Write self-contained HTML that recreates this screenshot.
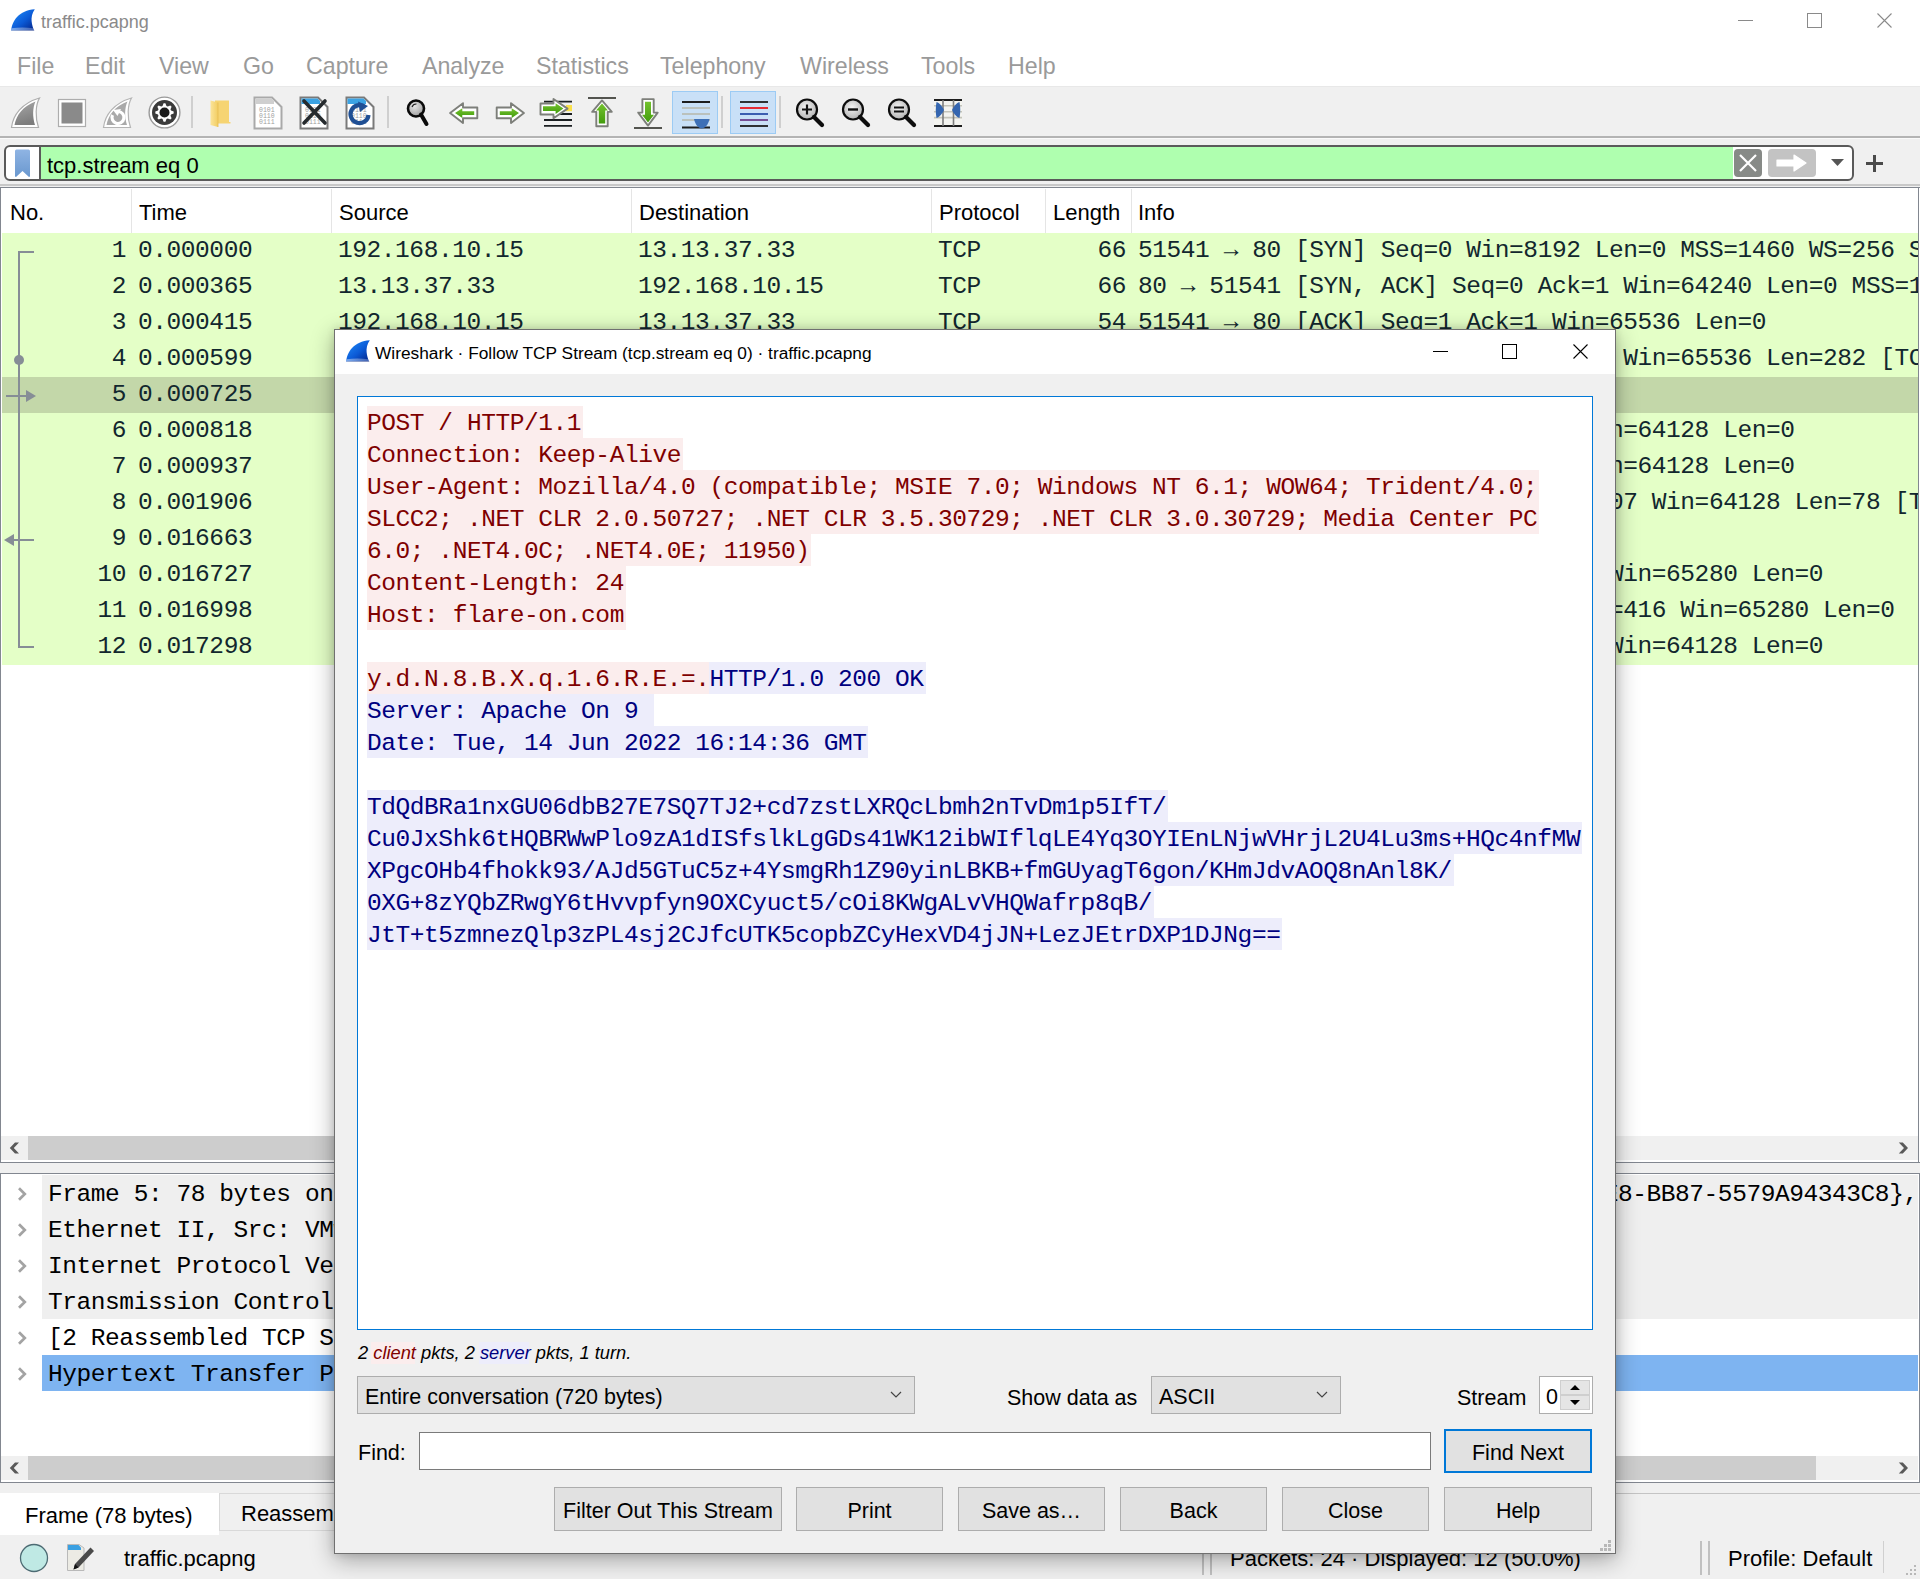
<!DOCTYPE html>
<html><head><meta charset="utf-8"><title>traffic.pcapng</title>
<style>
*{box-sizing:border-box}
html,body{margin:0;padding:0}
body{width:1920px;height:1579px;position:relative;overflow:hidden;background:#f0f0f0;font-family:'Liberation Sans', sans-serif;color:#000}
.a{position:absolute}
.m{font-family:'Liberation Mono', monospace;font-size:24.5px;letter-spacing:-0.430px;white-space:pre;line-height:36px}
.s{font-family:'Liberation Sans', sans-serif;white-space:pre}
</style></head><body>

<div class="a" style="left:0;top:0;width:1920px;height:87px;background:#fff"></div>
<div class="a" style="left:0;top:86px;width:1920px;height:1px;background:#e8e8e8"></div>
<svg class="a" style="left:11px;top:9px" width="24" height="22" viewBox="0 0 24 22"><defs><linearGradient id="sg" x1="0.2" y1="0.1" x2="0.9" y2="0.85"><stop offset="0" stop-color="#1b82f2"/><stop offset="0.55" stop-color="#0b5ad6"/><stop offset="1" stop-color="#05309a"/></linearGradient><linearGradient id="sgb" x1="0" y1="0" x2="1" y2="0"><stop offset="0" stop-color="#a9c9f5" stop-opacity="0.7"/><stop offset="1" stop-color="#7f98d0" stop-opacity="0.5"/></linearGradient></defs><path d="M0.3,21.8 C0.8,12 8,1.5 23.8,0.3 C21,4 20.3,9 20.6,12 C20.9,16 22,19 23.2,21.8 Z" fill="url(#sg)"/><path d="M0.6,19.3 C7,18.2 15,18.2 22.4,19.2 L23.2,21.8 L0.3,21.8 Z" fill="url(#sgb)"/><path d="M0.5,21.9 H23.3" stroke="#b8b8c8" stroke-width="0.8"/></svg>
<div class="a s" style="left:41px;top:10px;font-size:18px;line-height:24px;color:#8a8a8a">traffic.pcapng</div>
<div class="a" style="left:1738px;top:20px;width:15px;height:1px;background:#8a8a8a"></div>
<div class="a" style="left:1807px;top:13px;width:15px;height:15px;border:1px solid #8a8a8a"></div>
<svg class="a" style="left:1877px;top:13px" width="15" height="15"><path d="M0.5,0.5L14.5,14.5M14.5,0.5L0.5,14.5" stroke="#8a8a8a" stroke-width="1.1"/></svg>
<div class="a s" style="left:17px;top:51.9px;font-size:23.2px;line-height:28px;color:#9a9a9a">File</div>
<div class="a s" style="left:85px;top:51.9px;font-size:23.2px;line-height:28px;color:#9a9a9a">Edit</div>
<div class="a s" style="left:159px;top:51.9px;font-size:23.2px;line-height:28px;color:#9a9a9a">View</div>
<div class="a s" style="left:243px;top:51.9px;font-size:23.2px;line-height:28px;color:#9a9a9a">Go</div>
<div class="a s" style="left:306px;top:51.9px;font-size:23.2px;line-height:28px;color:#9a9a9a">Capture</div>
<div class="a s" style="left:422px;top:51.9px;font-size:23.2px;line-height:28px;color:#9a9a9a">Analyze</div>
<div class="a s" style="left:536px;top:51.9px;font-size:23.2px;line-height:28px;color:#9a9a9a">Statistics</div>
<div class="a s" style="left:660px;top:51.9px;font-size:23.2px;line-height:28px;color:#9a9a9a">Telephony</div>
<div class="a s" style="left:800px;top:51.9px;font-size:23.2px;line-height:28px;color:#9a9a9a">Wireless</div>
<div class="a s" style="left:921px;top:51.9px;font-size:23.2px;line-height:28px;color:#9a9a9a">Tools</div>
<div class="a s" style="left:1008px;top:51.9px;font-size:23.2px;line-height:28px;color:#9a9a9a">Help</div>
<div class="a" style="left:0;top:136px;width:1920px;height:2px;background:#b4b4b4"></div>
<div class="a" style="left:0;top:138px;width:1920px;height:1px;background:#fafafa"></div>
<svg class="a" style="left:10px;top:97px" width="32" height="32" viewBox="0 0 32 32"><defs><linearGradient id="fg1" x1="0" y1="0" x2="0.3" y2="1"><stop offset="0" stop-color="#a9a9a9"/><stop offset="1" stop-color="#7d7d7d"/></linearGradient></defs><path d="M1.5,30.5 C3,18 12,6 29.5,1 C25.5,8 25,20 28.5,30.5 Z" fill="#fff" stroke="#adadad" stroke-width="1.2"/><path d="M4.5,28 C6.5,18 13,9 25.5,4.5 C22.5,11 22.5,20 25,28 Z" fill="url(#fg1)"/></svg>
<svg class="a" style="left:57px;top:98px" width="30" height="30" viewBox="0 0 30 30"><rect x="1.5" y="1.5" width="27" height="27" fill="#fff" stroke="#adadad" stroke-width="1.2"/><rect x="4.5" y="4.5" width="21" height="21" fill="#8a8a8a"/></svg>
<svg class="a" style="left:102px;top:97px" width="32" height="32" viewBox="0 0 32 32"><path d="M1.5,30.5 C3,18 12,6 29.5,1 C25.5,8 25,20 28.5,30.5 Z" fill="#fff" stroke="#b4b4b4" stroke-width="1.2"/><path d="M4.5,28 C6.5,18 13,9 25.5,4.5 C22.5,11 22.5,20 25,28 Z" fill="#a9a9a9"/><path d="M10.5,18 A6,6 0 1 0 16.5,14.5" stroke="#fff" stroke-width="3.2" fill="none"/><path d="M11,13 L19,12 L15.5,19 Z" fill="#fff"/></svg>
<svg class="a" style="left:148px;top:96px" width="33" height="33" viewBox="0 0 33 33"><circle cx="16.5" cy="16.5" r="15.4" fill="#fff" stroke="#9a9a9a" stroke-width="1.4"/><circle cx="16.5" cy="16.5" r="12.5" fill="#3b3b3b"/><g transform="translate(0.5,0.5)"><polygon points="25.15,15.08 25.16,16.89 22.51,17.96 22.00,19.19 23.12,21.82 21.85,23.10 19.22,21.99 17.99,22.50 16.92,25.15 15.11,25.16 14.04,22.51 12.81,22.00 10.18,23.12 8.90,21.85 10.01,19.22 9.50,17.99 6.85,16.92 6.84,15.11 9.49,14.04 10.00,12.81 8.88,10.18 10.15,8.90 12.78,10.01 14.01,9.50 15.08,6.85 16.89,6.84 17.96,9.49 19.19,10.00 21.82,8.88 23.10,10.15 21.99,12.78 22.50,14.01" fill="#fff"/><circle cx="16" cy="16" r="5" fill="#1b1b1b"/></g></svg>
<div class="a" style="left:191px;top:96px;width:2px;height:32px;background:#cfcfcf"></div>
<div class="a" style="left:387px;top:96px;width:2px;height:32px;background:#cfcfcf"></div>
<div class="a" style="left:721px;top:96px;width:2px;height:32px;background:#cfcfcf"></div>
<div class="a" style="left:779px;top:96px;width:2px;height:32px;background:#cfcfcf"></div>
<svg class="a" style="left:209px;top:99px" width="22" height="30" viewBox="0 0 22 30"><defs><linearGradient id="fo" x1="0" y1="0" x2="1" y2="0"><stop offset="0" stop-color="#fbe49a"/><stop offset="1" stop-color="#f2cd62"/></linearGradient></defs><path d="M6,1.5 H20 V23 H21.5 V24.5 H6 Z" fill="#f6d472"/><path d="M1.5,1.5 L9,3.5 V28 L1.5,26 Z" fill="url(#fo)"/><path d="M9,3.5 L9,28" stroke="#e6bb50" stroke-width="0.8"/></svg>
<svg class="a" style="left:253px;top:96px" width="30" height="34" viewBox="0 0 30 34"><path d="M1.5,1.5 H19 L28.5,11 V32.5 H1.5 Z" fill="#fff" stroke="#a9a9a9" stroke-width="2"/><path d="M2.5,2.5 H18.5 L21,5 V8 H2.5 Z" fill="#cfcfcf"/><g fill="none" stroke="#a0a0a0" stroke-width="1.2"><text x="6" y="15.5" font-family="Liberation Mono" font-size="6.5" fill="#a0a0a0" stroke="none">0101</text><text x="6" y="21.5" font-family="Liberation Mono" font-size="6.5" fill="#a0a0a0" stroke="none">0110</text><text x="6" y="27.5" font-family="Liberation Mono" font-size="6.5" fill="#a0a0a0" stroke="none">0111</text></g></svg>
<svg class="a" style="left:299px;top:96px" width="30" height="34" viewBox="0 0 30 34"><path d="M1.5,1.5 H19 L28.5,11 V32.5 H1.5 Z" fill="#fff" stroke="#7a7a7a" stroke-width="2"/><path d="M2.5,2.5 H18.5 L21,5 V8 H2.5 Z" fill="#3ba3e4"/><g fill="none" stroke="#a0a0a0" stroke-width="1.2"><text x="6" y="15.5" font-family="Liberation Mono" font-size="6.5" fill="#a0a0a0" stroke="none">0101</text><text x="6" y="21.5" font-family="Liberation Mono" font-size="6.5" fill="#a0a0a0" stroke="none">0110</text><text x="6" y="27.5" font-family="Liberation Mono" font-size="6.5" fill="#a0a0a0" stroke="none">0111</text></g></svg>
<svg class="a" style="left:301px;top:97px" width="28" height="32" viewBox="0 0 28 32"><path d="M3,4 L24,26 M24,4 L3,26" stroke="#262b2e" stroke-width="3.6" stroke-linecap="round"/></svg>
<svg class="a" style="left:345px;top:96px" width="30" height="34" viewBox="0 0 30 34"><path d="M1.5,1.5 H19 L28.5,11 V32.5 H1.5 Z" fill="#fff" stroke="#7a7a7a" stroke-width="2"/><path d="M2.5,2.5 H18.5 L21,5 V8 H2.5 Z" fill="#3ba3e4"/><g fill="none" stroke="#a0a0a0" stroke-width="1.2"><text x="6" y="15.5" font-family="Liberation Mono" font-size="6.5" fill="#a0a0a0" stroke="none">0101</text><text x="6" y="21.5" font-family="Liberation Mono" font-size="6.5" fill="#a0a0a0" stroke="none">0110</text><text x="6" y="27.5" font-family="Liberation Mono" font-size="6.5" fill="#a0a0a0" stroke="none">0111</text></g></svg>
<svg class="a" style="left:346px;top:98px" width="28" height="30" viewBox="0 0 28 30"><path d="M19,9 A9,9 0 1 0 22.5,17" stroke="#1f4f94" stroke-width="4.2" fill="none"/><path d="M12,3.5 L22,8 L14,14 Z" fill="#1f4f94"/></svg>
<svg class="a" style="left:404px;top:98px" width="28" height="30" viewBox="0 0 28 30"><defs><radialGradient id="mg" cx="0.4" cy="0.35" r="0.7"><stop offset="0" stop-color="#e8e8e8"/><stop offset="1" stop-color="#9a9a9a"/></radialGradient></defs><circle cx="12" cy="10.5" r="8" fill="url(#mg)" stroke="#0a0a0a" stroke-width="2.6"/><path d="M17,16.5 L22.5,26" stroke="#0a0a0a" stroke-width="4" stroke-linecap="round"/><path d="M8,9 A4.5,4.5 0 0 1 12.5,6" stroke="#222" stroke-width="1.2" fill="none"/></svg>
<svg class="a" style="left:448px;top:100px" width="32" height="26" viewBox="0 0 32 26"><defs><linearGradient id="ag" x1="0" y1="0" x2="0" y2="1"><stop offset="0" stop-color="#74c22e"/><stop offset="1" stop-color="#429c0c"/></linearGradient></defs><path d="M2.1,13.1 L15,3.2 V7.5 H29.3 V18.3 H15 V23 Z" fill="#fff" stroke="#7d7f7a" stroke-width="1.9" stroke-linejoin="round"/><path d="M7,13.1 L14.3,8.2 V11.2 H26.2 V15 H14.3 V18 Z" fill="url(#ag)"/></svg>
<svg class="a" style="left:494px;top:100px" width="32" height="26" viewBox="0 0 32 26"><g transform="translate(32,0) scale(-1,1)"><path d="M2.1,13.1 L15,3.2 V7.5 H29.3 V18.3 H15 V23 Z" fill="#fff" stroke="#7d7f7a" stroke-width="1.9" stroke-linejoin="round"/><path d="M7,13.1 L14.3,8.2 V11.2 H26.2 V15 H14.3 V18 Z" fill="url(#ag)"/></g></svg>
<svg class="a" style="left:539px;top:98px" width="36" height="32" viewBox="0 0 36 32"><g stroke="#1b1f22" stroke-width="1.8"><path d="M5,3.7 H33 M14,16 H33 M5,22 H33 M5,27.9 H33"/></g><rect x="27" y="7" width="6" height="6.2" fill="#f9e04b"/><path d="M1.5,5.5 H14.5 V1 L28.5,10.6 L14.5,20.3 V16.5 H1.5 Z" fill="#fff" stroke="#7d7f7a" stroke-width="1.9" stroke-linejoin="round"/><path d="M4,8.3 H16.6 V5.3 L24.4,10.6 L16.6,15.9 V13 H4 Z" fill="url(#ag)"/></svg>
<svg class="a" style="left:587px;top:96px" width="30" height="34" viewBox="0 0 30 34"><path d="M1,2 H29" stroke="#4a4b46" stroke-width="1.9"/><path d="M15,4.4 L24.8,15.9 H20.7 V30.3 H9.3 V15.9 H5.2 Z" fill="#fff" stroke="#7d7f7a" stroke-width="1.9" stroke-linejoin="round"/><path d="M15,7.6 L21,14.6 H18.2 V27.6 H11.8 V14.6 H9 Z" fill="url(#ag)"/></svg>
<svg class="a" style="left:633px;top:96px" width="30" height="34" viewBox="0 0 30 34"><path d="M1,32 H29" stroke="#4a4b46" stroke-width="1.9"/><path d="M9.4,3.1 H20.7 V16.6 H24.7 L15,29.6 L5.2,16.6 H9.4 Z" fill="#fff" stroke="#7d7f7a" stroke-width="1.9" stroke-linejoin="round"/><path d="M12,5.8 H18 V18.8 H21 L15,26.6 L9,18.8 H12 Z" fill="url(#ag)"/></svg>
<div class="a" style="left:672px;top:91px;width:46px;height:43px;background:#c9e0f7;border:1px solid #9ccbf4"></div>
<svg class="a" style="left:681px;top:99px" width="30" height="32" viewBox="0 0 30 32"><g stroke="#1d1d1d" stroke-width="1.8"><path d="M1,3 H29 M1,28.5 H29"/></g><g stroke="#b6b6aa" stroke-width="1.6"><path d="M1,9 H29 M1,15 H29 M1,21 H29"/></g><path d="M13,20 H28.5 C27,26 24,29.5 20.7,29.5 C17.5,29.5 14.5,26 13,20 Z" fill="#3d6fb6"/></svg>
<div class="a" style="left:730px;top:91px;width:46px;height:43px;background:#c9e0f7;border:1px solid #9ccbf4"></div>
<svg class="a" style="left:739px;top:99px" width="30" height="32" viewBox="0 0 30 32"><g stroke-width="1.8"><path d="M1,3 H29" stroke="#1d1d1d"/><path d="M1,9 H29" stroke="#e8171e"/><path d="M1,15 H29" stroke="#2c4ea8"/><path d="M1,21 H29" stroke="#6d3f8a"/><path d="M1,27 H29" stroke="#1d1d1d"/></g></svg>
<svg class="a" style="left:795px;top:96px" width="32" height="32" viewBox="0 0 32 32"><defs><radialGradient id="zg" cx="0.45" cy="0.4" r="0.7"><stop offset="0" stop-color="#f4f4f4"/><stop offset="1" stop-color="#a8a8a8"/></radialGradient></defs><circle cx="12" cy="13.5" r="10" fill="url(#zg)" stroke="#0d0d0d" stroke-width="2.2"/><path d="M19,21 L27,29" stroke="#0d0d0d" stroke-width="4.2" stroke-linecap="round"/><path d="M12,8.5 V18.5 M7,13.5 H17" stroke="#111" stroke-width="2.2"/></svg>
<svg class="a" style="left:841px;top:96px" width="32" height="32" viewBox="0 0 32 32"><defs><radialGradient id="zg" cx="0.45" cy="0.4" r="0.7"><stop offset="0" stop-color="#f4f4f4"/><stop offset="1" stop-color="#a8a8a8"/></radialGradient></defs><circle cx="12" cy="13.5" r="10" fill="url(#zg)" stroke="#0d0d0d" stroke-width="2.2"/><path d="M19,21 L27,29" stroke="#0d0d0d" stroke-width="4.2" stroke-linecap="round"/><path d="M7,13.5 H17" stroke="#111" stroke-width="2.4"/></svg>
<svg class="a" style="left:887px;top:96px" width="32" height="32" viewBox="0 0 32 32"><defs><radialGradient id="zg" cx="0.45" cy="0.4" r="0.7"><stop offset="0" stop-color="#f4f4f4"/><stop offset="1" stop-color="#a8a8a8"/></radialGradient></defs><circle cx="12" cy="13.5" r="10" fill="url(#zg)" stroke="#0d0d0d" stroke-width="2.2"/><path d="M19,21 L27,29" stroke="#0d0d0d" stroke-width="4.2" stroke-linecap="round"/><path d="M7,11.5 H17 M7,15.5 H17" stroke="#111" stroke-width="2"/></svg>
<svg class="a" style="left:932px;top:97px" width="32" height="32" viewBox="0 0 32 32"><rect x="2" y="4" width="28" height="24" fill="#f4f4f0"/><g stroke="#c4c4ba" stroke-width="1.6"><path d="M2,8.7 H30 M2,14.8 H30 M2,20.6 H30"/></g><g stroke="#1d1d1d" stroke-width="1.8"><path d="M2,3 H30 M2,29 H30"/></g><g stroke="#7d7d7d" stroke-width="1.6"><path d="M11,3 V29 M21.5,3 V29"/></g><path d="M4.5,5 C8,6 10.5,10 12,13 C10.5,16 8,20 4.5,21 C3.5,16 3.5,10 4.5,5 Z" fill="#3566b0"/><path d="M27.5,5 C24,6 21.5,10 20,13 C21.5,16 24,20 27.5,21 C28.5,16 28.5,10 27.5,5 Z" fill="#3566b0"/></svg>
<div class="a" style="left:4px;top:145px;width:1850px;height:36px;border:2px solid #5a5a5a;border-radius:6px;background:#fff;overflow:hidden"><div class="a" style="left:33px;top:0;width:2px;height:32px;background:#5a5a5a"></div><div class="a" style="left:35px;top:0;width:1692px;height:32px;background:#afffaf"></div></div>
<svg class="a" style="left:14px;top:149px" width="17" height="29" viewBox="0 0 17 29"><defs><linearGradient id="bm" x1="0" y1="0" x2="0" y2="1"><stop offset="0" stop-color="#8fb4e3"/><stop offset="1" stop-color="#6a98cf"/></linearGradient></defs><path d="M1,2 Q1,0.5 2.5,0.5 L14.5,0.5 Q16,0.5 16,2 L16,27 Q16,28 15,28 L8.5,22 L2,28 Q1,28 1,27 Z" fill="url(#bm)"/></svg>
<div class="a s" style="left:47px;top:152px;font-size:22px;line-height:28px;color:#000">tcp.stream eq 0</div>
<div class="a" style="left:1734px;top:149px;width:28px;height:28px;background:#878a87;border-radius:4px"></div>
<svg class="a" style="left:1738px;top:153px" width="20" height="20"><path d="M2,2L18,18M18,2L2,18" stroke="#fff" stroke-width="2.2"/></svg>
<div class="a" style="left:1768px;top:149px;width:48px;height:28px;background:#c3c3c3;border-radius:4px"></div>
<svg class="a" style="left:1775px;top:154px" width="34" height="18"><path d="M2,6 L19,6 L19,1 L31,9 L19,17 L19,12 L2,12 Z" fill="#fff" stroke="#fff" stroke-width="1.2" stroke-linejoin="round"/></svg>
<svg class="a" style="left:1831px;top:159px" width="14" height="9"><path d="M0,0L13,0L6.5,7Z" fill="#555"/></svg>
<svg class="a" style="left:1866px;top:155px" width="17" height="17"><path d="M8.5,0V17M0,8.5H17" stroke="#4a4a4a" stroke-width="3"/></svg>
<div class="a" style="left:0;top:184px;width:1920px;height:2px;background:#c8c8c8"></div>
<div class="a" style="left:0;top:187px;width:1920px;height:976px;background:#fff;border:1px solid #828790;border-right:none"></div>
<div class="a" style="left:1918px;top:187px;width:1px;height:976px;background:#828790"></div>
<div class="a s" style="left:10px;top:198.5px;font-size:22px;line-height:28px">No.</div>
<div class="a s" style="left:139px;top:198.5px;font-size:22px;line-height:28px">Time</div>
<div class="a s" style="left:339px;top:198.5px;font-size:22px;line-height:28px">Source</div>
<div class="a s" style="left:639px;top:198.5px;font-size:22px;line-height:28px">Destination</div>
<div class="a s" style="left:939px;top:198.5px;font-size:22px;line-height:28px">Protocol</div>
<div class="a s" style="left:1053px;top:198.5px;font-size:22px;line-height:28px">Length</div>
<div class="a s" style="left:1138px;top:198.5px;font-size:22px;line-height:28px">Info</div>
<div class="a" style="left:131px;top:189px;width:1px;height:44px;background:#e5e5e5"></div>
<div class="a" style="left:331px;top:189px;width:1px;height:44px;background:#e5e5e5"></div>
<div class="a" style="left:631px;top:189px;width:1px;height:44px;background:#e5e5e5"></div>
<div class="a" style="left:931px;top:189px;width:1px;height:44px;background:#e5e5e5"></div>
<div class="a" style="left:1045px;top:189px;width:1px;height:44px;background:#e5e5e5"></div>
<div class="a" style="left:1131px;top:189px;width:1px;height:44px;background:#e5e5e5"></div>
<div class="a" style="left:2px;top:233px;width:1916px;height:432px;background:#e4ffc7"></div>
<div class="a" style="left:2px;top:377px;width:1916px;height:36px;background:#c3d7a9"></div>
<div class="a" style="left:0;top:233px;width:1918px;height:432px;overflow:hidden">
<div class="a m" style="left:0;top:0px;width:126px;text-align:right;color:#12272e">1</div>
<div class="a m" style="left:138px;top:0px;color:#12272e">0.000000</div>
<div class="a m" style="left:338px;top:0px;color:#12272e">192.168.10.15</div>
<div class="a m" style="left:638px;top:0px;color:#12272e">13.13.37.33</div>
<div class="a m" style="left:938px;top:0px;color:#12272e">TCP</div>
<div class="a m" style="left:1000px;top:0px;width:126px;text-align:right;color:#12272e">66</div>
<div class="a m" style="left:1138px;top:0px;color:#12272e">51541 → 80 [SYN] Seq=0 Win=8192 Len=0 MSS=1460 WS=256 SACK_PERM=1</div>
<div class="a m" style="left:0;top:36px;width:126px;text-align:right;color:#12272e">2</div>
<div class="a m" style="left:138px;top:36px;color:#12272e">0.000365</div>
<div class="a m" style="left:338px;top:36px;color:#12272e">13.13.37.33</div>
<div class="a m" style="left:638px;top:36px;color:#12272e">192.168.10.15</div>
<div class="a m" style="left:938px;top:36px;color:#12272e">TCP</div>
<div class="a m" style="left:1000px;top:36px;width:126px;text-align:right;color:#12272e">66</div>
<div class="a m" style="left:1138px;top:36px;color:#12272e">80 → 51541 [SYN, ACK] Seq=0 Ack=1 Win=64240 Len=0 MSS=1460 WS=256 SACK_PERM=1</div>
<div class="a m" style="left:0;top:72px;width:126px;text-align:right;color:#12272e">3</div>
<div class="a m" style="left:138px;top:72px;color:#12272e">0.000415</div>
<div class="a m" style="left:338px;top:72px;color:#12272e">192.168.10.15</div>
<div class="a m" style="left:638px;top:72px;color:#12272e">13.13.37.33</div>
<div class="a m" style="left:938px;top:72px;color:#12272e">TCP</div>
<div class="a m" style="left:1000px;top:72px;width:126px;text-align:right;color:#12272e">54</div>
<div class="a m" style="left:1138px;top:72px;color:#12272e">51541 → 80 [ACK] Seq=1 Ack=1 Win=65536 Len=0</div>
<div class="a m" style="left:0;top:108px;width:126px;text-align:right;color:#12272e">4</div>
<div class="a m" style="left:138px;top:108px;color:#12272e">0.000599</div>
<div class="a m" style="left:338px;top:108px;color:#12272e">192.168.10.15</div>
<div class="a m" style="left:638px;top:108px;color:#12272e">13.13.37.33</div>
<div class="a m" style="left:938px;top:108px;color:#12272e">TCP</div>
<div class="a m" style="left:1000px;top:108px;width:126px;text-align:right;color:#12272e">336</div>
<div class="a m" style="left:1138px;top:108px;color:#12272e">51541 → 80 [PSH, ACK] Seq=1 Ack=1 Win=65536 Len=282 [TCP segment of a reassembled PDU]</div>
<div class="a m" style="left:0;top:144px;width:126px;text-align:right;color:#12272e">5</div>
<div class="a m" style="left:138px;top:144px;color:#12272e">0.000725</div>
<div class="a m" style="left:338px;top:144px;color:#12272e">192.168.10.15</div>
<div class="a m" style="left:638px;top:144px;color:#12272e">13.13.37.33</div>
<div class="a m" style="left:938px;top:144px;color:#12272e">HTTP</div>
<div class="a m" style="left:1000px;top:144px;width:126px;text-align:right;color:#12272e">78</div>
<div class="a m" style="left:1138px;top:144px;color:#12272e">POST / HTTP/1.1</div>
<div class="a m" style="left:0;top:180px;width:126px;text-align:right;color:#12272e">6</div>
<div class="a m" style="left:138px;top:180px;color:#12272e">0.000818</div>
<div class="a m" style="left:338px;top:180px;color:#12272e">13.13.37.33</div>
<div class="a m" style="left:638px;top:180px;color:#12272e">192.168.10.15</div>
<div class="a m" style="left:938px;top:180px;color:#12272e">TCP</div>
<div class="a m" style="left:1000px;top:180px;width:126px;text-align:right;color:#12272e">54</div>
<div class="a m" style="left:1138px;top:180px;color:#12272e">80 → 51541 [ACK] Seq=1 Ack=283 Win=64128 Len=0</div>
<div class="a m" style="left:0;top:216px;width:126px;text-align:right;color:#12272e">7</div>
<div class="a m" style="left:138px;top:216px;color:#12272e">0.000937</div>
<div class="a m" style="left:338px;top:216px;color:#12272e">13.13.37.33</div>
<div class="a m" style="left:638px;top:216px;color:#12272e">192.168.10.15</div>
<div class="a m" style="left:938px;top:216px;color:#12272e">TCP</div>
<div class="a m" style="left:1000px;top:216px;width:126px;text-align:right;color:#12272e">54</div>
<div class="a m" style="left:1138px;top:216px;color:#12272e">80 → 51541 [ACK] Seq=1 Ack=307 Win=64128 Len=0</div>
<div class="a m" style="left:0;top:252px;width:126px;text-align:right;color:#12272e">8</div>
<div class="a m" style="left:138px;top:252px;color:#12272e">0.001906</div>
<div class="a m" style="left:338px;top:252px;color:#12272e">13.13.37.33</div>
<div class="a m" style="left:638px;top:252px;color:#12272e">192.168.10.15</div>
<div class="a m" style="left:938px;top:252px;color:#12272e">TCP</div>
<div class="a m" style="left:1000px;top:252px;width:126px;text-align:right;color:#12272e">132</div>
<div class="a m" style="left:1138px;top:252px;color:#12272e">80 → 51541 [PSH, ACK] Seq=1 Ack=307 Win=64128 Len=78 [TCP segment of a reassembled PDU]</div>
<div class="a m" style="left:0;top:288px;width:126px;text-align:right;color:#12272e">9</div>
<div class="a m" style="left:138px;top:288px;color:#12272e">0.016663</div>
<div class="a m" style="left:338px;top:288px;color:#12272e">13.13.37.33</div>
<div class="a m" style="left:638px;top:288px;color:#12272e">192.168.10.15</div>
<div class="a m" style="left:938px;top:288px;color:#12272e">HTTP</div>
<div class="a m" style="left:1000px;top:288px;width:126px;text-align:right;color:#12272e">54</div>
<div class="a m" style="left:1138px;top:288px;color:#12272e">HTTP/1.0 200 OK</div>
<div class="a m" style="left:0;top:324px;width:126px;text-align:right;color:#12272e">10</div>
<div class="a m" style="left:138px;top:324px;color:#12272e">0.016727</div>
<div class="a m" style="left:338px;top:324px;color:#12272e">192.168.10.15</div>
<div class="a m" style="left:638px;top:324px;color:#12272e">13.13.37.33</div>
<div class="a m" style="left:938px;top:324px;color:#12272e">TCP</div>
<div class="a m" style="left:1000px;top:324px;width:126px;text-align:right;color:#12272e">54</div>
<div class="a m" style="left:1138px;top:324px;color:#12272e">51541 → 80 [ACK] Seq=307 Ack=187 Win=65280 Len=0</div>
<div class="a m" style="left:0;top:360px;width:126px;text-align:right;color:#12272e">11</div>
<div class="a m" style="left:138px;top:360px;color:#12272e">0.016998</div>
<div class="a m" style="left:338px;top:360px;color:#12272e">192.168.10.15</div>
<div class="a m" style="left:638px;top:360px;color:#12272e">13.13.37.33</div>
<div class="a m" style="left:938px;top:360px;color:#12272e">TCP</div>
<div class="a m" style="left:1000px;top:360px;width:126px;text-align:right;color:#12272e">54</div>
<div class="a m" style="left:1138px;top:360px;color:#12272e">51541 → 80 [FIN, ACK] Seq=307 Ack=416 Win=65280 Len=0</div>
<div class="a m" style="left:0;top:396px;width:126px;text-align:right;color:#12272e">12</div>
<div class="a m" style="left:138px;top:396px;color:#12272e">0.017298</div>
<div class="a m" style="left:338px;top:396px;color:#12272e">13.13.37.33</div>
<div class="a m" style="left:638px;top:396px;color:#12272e">192.168.10.15</div>
<div class="a m" style="left:938px;top:396px;color:#12272e">TCP</div>
<div class="a m" style="left:1000px;top:396px;width:126px;text-align:right;color:#12272e">54</div>
<div class="a m" style="left:1138px;top:396px;color:#12272e">80 → 51541 [ACK] Seq=416 Ack=308 Win=64128 Len=0</div>
</div>
<svg class="a" style="left:0;top:233px" width="40" height="432"><g stroke="#868d96" stroke-width="2" fill="none"><path d="M34,19 H19 V414 H34"/><path d="M6,163 H28"/><path d="M14,307 H34"/></g><g fill="#868d96"><circle cx="19" cy="127" r="5"/><path d="M26,157 L36,163 L26,169Z"/><path d="M4,307 L14,301 L14,313Z"/></g></svg>
<div class="a" style="left:1px;top:1136px;width:1917px;height:24px;background:#f0f0f0"></div>
<div class="a" style="left:28px;top:1136px;width:1500px;height:24px;background:#cdcdcd"></div>
<svg class="a" style="left:9px;top:1141px" width="11" height="14"><path d="M10,1.5 L6,1.5 L0.8,7 L6,12.5 L10,12.5 L4.8,7 Z" fill="#5a5a5a"/></svg>
<svg class="a" style="left:1898px;top:1141px" width="11" height="14"><path d="M0.8,1.5 L4.8,1.5 L10,7 L4.8,12.5 L0.8,12.5 L6,7 Z" fill="#5a5a5a"/></svg>
<div class="a" style="left:0;top:1173px;width:1920px;height:310px;background:#fff;border:1px solid #828790"></div>
<div class="a" style="left:42px;top:1175px;width:1876px;height:144px;background:#efefef"></div>
<div class="a" style="left:42px;top:1355px;width:1876px;height:36px;background:#7eb4f1"></div>
<svg class="a" style="left:17px;top:1186.5px" width="11" height="14"><path d="M2,1.2L7.8,7L2,12.8" stroke="#a3a3a3" stroke-width="2.7" fill="none"/></svg>
<div class="a m" style="left:48px;top:1176.5px;color:#000">Frame 5: 78 bytes on wire (624 bits), 78 bytes captured (624 bits) on interface \Device\NPF_{xxxxxxxx-xxxx-xxE8-BB87-5579A94343C8},</div>
<svg class="a" style="left:17px;top:1222.5px" width="11" height="14"><path d="M2,1.2L7.8,7L2,12.8" stroke="#a3a3a3" stroke-width="2.7" fill="none"/></svg>
<div class="a m" style="left:48px;top:1212.5px;color:#000">Ethernet II, Src: VMware_xx:xx:xx</div>
<svg class="a" style="left:17px;top:1258.5px" width="11" height="14"><path d="M2,1.2L7.8,7L2,12.8" stroke="#a3a3a3" stroke-width="2.7" fill="none"/></svg>
<div class="a m" style="left:48px;top:1248.5px;color:#000">Internet Protocol Version 4, Src: 192.168.10.15, Dst: 13.13.37.33</div>
<svg class="a" style="left:17px;top:1294.5px" width="11" height="14"><path d="M2,1.2L7.8,7L2,12.8" stroke="#a3a3a3" stroke-width="2.7" fill="none"/></svg>
<div class="a m" style="left:48px;top:1284.5px;color:#000">Transmission Control Protocol, Src Port: 51541, Dst Port: 80, Seq: 283, Ack: 1, Len: 24</div>
<svg class="a" style="left:17px;top:1330.5px" width="11" height="14"><path d="M2,1.2L7.8,7L2,12.8" stroke="#a3a3a3" stroke-width="2.7" fill="none"/></svg>
<div class="a m" style="left:48px;top:1320.5px;color:#000">[2 Reassembled TCP Segments (306 bytes): #4(282), #5(24)]</div>
<svg class="a" style="left:17px;top:1366.5px" width="11" height="14"><path d="M2,1.2L7.8,7L2,12.8" stroke="#a3a3a3" stroke-width="2.7" fill="none"/></svg>
<div class="a m" style="left:48px;top:1356.5px;color:#000">Hypertext Transfer Protocol</div>
<div class="a" style="left:1px;top:1456px;width:1917px;height:24px;background:#f0f0f0"></div>
<div class="a" style="left:28px;top:1456px;width:1788px;height:24px;background:#cdcdcd"></div>
<svg class="a" style="left:9px;top:1461px" width="11" height="14"><path d="M10,1.5 L6,1.5 L0.8,7 L6,12.5 L10,12.5 L4.8,7 Z" fill="#5a5a5a"/></svg>
<svg class="a" style="left:1898px;top:1461px" width="11" height="14"><path d="M0.8,1.5 L4.8,1.5 L10,7 L4.8,12.5 L0.8,12.5 L6,7 Z" fill="#5a5a5a"/></svg>
<div class="a" style="left:0;top:1493px;width:1920px;height:1px;background:#c4c4c4"></div>
<div class="a" style="left:0px;top:1493px;width:219px;height:42px;background:#fff"></div>
<div class="a s" style="left:25px;top:1502px;font-size:22px;line-height:28px">Frame (78 bytes)</div>
<div class="a" style="left:219px;top:1493px;width:300px;height:38px;background:#f0f0f0;border:1px solid #d9d9d9"></div>
<div class="a s" style="left:241px;top:1500px;font-size:22px;line-height:28px">Reassembled TCP (306 bytes)</div>
<svg class="a" style="left:19px;top:1543px" width="30" height="30"><circle cx="15" cy="15" r="13.5" fill="#bfe9e4" stroke="#4d6b73" stroke-width="1.3"/></svg>
<svg class="a" style="left:66px;top:1542px" width="30" height="30"><path d="M1.5,2.5 H13 L18,6 V28.5 H1.5 Z" fill="#ecebe4" stroke="#b9b9b9"/><path d="M2,3 H12.5 L15,5.5 V8 H2 Z" fill="#3aa0e2"/><path d="M9,22 L24.5,5.5 L28,9 L12.5,25.5 L7.5,27.5Z" fill="#4a4a4a"/><path d="M7.5,27.5 L9,22 L12.5,25.5Z" fill="#111"/></svg>
<div class="a s" style="left:124px;top:1545px;font-size:22px;line-height:28px">traffic.pcapng</div>
<div class="a" style="left:1202px;top:1541px;width:2px;height:34px;background:#c0c0c0"></div>
<div class="a" style="left:1210px;top:1541px;width:2px;height:34px;background:#c0c0c0"></div>
<div class="a s" style="left:1230px;top:1545px;font-size:22px;line-height:28px">Packets: 24 · Displayed: 12 (50.0%)</div>
<div class="a" style="left:1700px;top:1541px;width:2px;height:34px;background:#c0c0c0"></div>
<div class="a" style="left:1708px;top:1541px;width:2px;height:34px;background:#c0c0c0"></div>
<div class="a s" style="left:1728px;top:1545px;font-size:22px;line-height:28px">Profile: Default</div>
<div class="a" style="left:1883px;top:1541px;width:1px;height:32px;background:#d0d0d0"></div>
<svg class="a" style="left:1905px;top:1564px" width="14" height="14"><g fill="#b8b8b8"><rect x="9" y="1" width="2" height="2"/><rect x="5" y="5" width="2" height="2"/><rect x="9" y="5" width="2" height="2"/><rect x="1" y="9" width="2" height="2"/><rect x="5" y="9" width="2" height="2"/><rect x="9" y="9" width="2" height="2"/></g></svg>
<div class="a" style="left:334px;top:329px;width:1282px;height:1225px;background:#f0f0f0;border:1px solid #707070;box-shadow:0 6px 22px rgba(0,0,0,0.32), 0 0 8px rgba(0,0,0,0.12)"></div>
<div class="a" style="left:335px;top:330px;width:1280px;height:44px;background:#fff"></div>
<svg class="a" style="left:346px;top:340px" width="24" height="22" viewBox="0 0 24 22"><defs><linearGradient id="sg2" x1="0.2" y1="0.1" x2="0.9" y2="0.85"><stop offset="0" stop-color="#1b82f2"/><stop offset="0.55" stop-color="#0b5ad6"/><stop offset="1" stop-color="#05309a"/></linearGradient><linearGradient id="sg2b" x1="0" y1="0" x2="1" y2="0"><stop offset="0" stop-color="#a9c9f5" stop-opacity="0.7"/><stop offset="1" stop-color="#7f98d0" stop-opacity="0.5"/></linearGradient></defs><path d="M0.3,21.8 C0.8,12 8,1.5 23.8,0.3 C21,4 20.3,9 20.6,12 C20.9,16 22,19 23.2,21.8 Z" fill="url(#sg2)"/><path d="M0.6,19.3 C7,18.2 15,18.2 22.4,19.2 L23.2,21.8 L0.3,21.8 Z" fill="url(#sg2b)"/><path d="M0.5,21.9 H23.3" stroke="#b8b8c8" stroke-width="0.8"/></svg>
<div class="a s" style="left:375px;top:341px;font-size:17.3px;line-height:24px;color:#000">Wireshark · Follow TCP Stream (tcp.stream eq 0) · traffic.pcapng</div>
<div class="a" style="left:1433px;top:351px;width:15px;height:1px;background:#000"></div>
<div class="a" style="left:1502px;top:344px;width:15px;height:15px;border:1px solid #000"></div>
<svg class="a" style="left:1573px;top:344px" width="15" height="15"><path d="M0.5,0.5L14.5,14.5M14.5,0.5L0.5,14.5" stroke="#000" stroke-width="1.1"/></svg>
<div class="a" style="left:357px;top:396px;width:1236px;height:934px;background:#fff;border:1px solid #0078d7"></div>
<div class="a" style="left:367.00px;top:406px;width:216.05px;height:32px;background:#fbeded"></div>
<div class="a m" style="left:367.00px;top:407.5px;line-height:32px;color:#7f0000">POST / HTTP/1.1</div>
<div class="a" style="left:367.00px;top:438px;width:315.94px;height:32px;background:#fbeded"></div>
<div class="a m" style="left:367.00px;top:439.5px;line-height:32px;color:#7f0000">Connection: Keep-Alive</div>
<div class="a" style="left:367.00px;top:470px;width:1172.14px;height:32px;background:#fbeded"></div>
<div class="a m" style="left:367.00px;top:471.5px;line-height:32px;color:#7f0000">User-Agent: Mozilla/4.0 (compatible; MSIE 7.0; Windows NT 6.1; WOW64; Trident/4.0;</div>
<div class="a" style="left:367.00px;top:502px;width:1172.14px;height:32px;background:#fbeded"></div>
<div class="a m" style="left:367.00px;top:503.5px;line-height:32px;color:#7f0000">SLCC2; .NET CLR 2.0.50727; .NET CLR 3.5.30729; .NET CLR 3.0.30729; Media Center PC</div>
<div class="a" style="left:367.00px;top:534px;width:444.37px;height:32px;background:#fbeded"></div>
<div class="a m" style="left:367.00px;top:535.5px;line-height:32px;color:#7f0000">6.0; .NET4.0C; .NET4.0E; 11950)</div>
<div class="a" style="left:367.00px;top:566px;width:258.86px;height:32px;background:#fbeded"></div>
<div class="a m" style="left:367.00px;top:567.5px;line-height:32px;color:#7f0000">Content-Length: 24</div>
<div class="a" style="left:367.00px;top:598px;width:258.86px;height:32px;background:#fbeded"></div>
<div class="a m" style="left:367.00px;top:599.5px;line-height:32px;color:#7f0000">Host: flare-on.com</div>
<div class="a" style="left:367.00px;top:662px;width:342.48px;height:32px;background:#fbeded"></div>
<div class="a m" style="left:367.00px;top:663.5px;line-height:32px;color:#7f0000">y.d.N.8.B.X.q.1.6.R.E.=.</div>
<div class="a" style="left:709.48px;top:662px;width:216.05px;height:32px;background:#ededfb"></div>
<div class="a m" style="left:709.48px;top:663.5px;line-height:32px;color:#00007f">HTTP/1.0 200 OK</div>
<div class="a" style="left:367.00px;top:694px;width:287.40px;height:32px;background:#ededfb"></div>
<div class="a m" style="left:367.00px;top:695.5px;line-height:32px;color:#00007f">Server: Apache On 9 </div>
<div class="a" style="left:367.00px;top:726px;width:501.45px;height:32px;background:#ededfb"></div>
<div class="a m" style="left:367.00px;top:727.5px;line-height:32px;color:#00007f">Date: Tue, 14 Jun 2022 16:14:36 GMT</div>
<div class="a" style="left:367.00px;top:790px;width:801.12px;height:32px;background:#ededfb"></div>
<div class="a m" style="left:367.00px;top:791.5px;line-height:32px;color:#00007f">TdQdBRa1nxGU06dbB27E7SQ7TJ2+cd7zstLXRQcLbmh2nTvDm1p5IfT/</div>
<div class="a" style="left:367.00px;top:822px;width:1214.95px;height:32px;background:#ededfb"></div>
<div class="a m" style="left:367.00px;top:823.5px;line-height:32px;color:#00007f">Cu0JxShk6tHQBRWwPlo9zA1dISfslkLgGDs41WK12ibWIflqLE4Yq3OYIEnLNjwVHrjL2U4Lu3ms+HQc4nfMW</div>
<div class="a" style="left:367.00px;top:854px;width:1086.52px;height:32px;background:#ededfb"></div>
<div class="a m" style="left:367.00px;top:855.5px;line-height:32px;color:#00007f">XPgcOHb4fhokk93/AJd5GTuC5z+4YsmgRh1Z90yinLBKB+fmGUyagT6gon/KHmJdvAOQ8nAnl8K/</div>
<div class="a" style="left:367.00px;top:886px;width:786.85px;height:32px;background:#ededfb"></div>
<div class="a m" style="left:367.00px;top:887.5px;line-height:32px;color:#00007f">0XG+8zYQbZRwgY6tHvvpfyn9OXCyuct5/cOi8KWgALvVHQWafrp8qB/</div>
<div class="a" style="left:367.00px;top:918px;width:915.28px;height:32px;background:#ededfb"></div>
<div class="a m" style="left:367.00px;top:919.5px;line-height:32px;color:#00007f">JtT+t5zmnezQlp3zPL4sj2CJfcUTK5copbZCyHexVD4jJN+LezJEtrDXP1DJNg==</div>
<div class="a" style="left:371px;top:1342px;width:44px;height:22px;background:#fbeded"></div>
<div class="a" style="left:479px;top:1342px;width:50px;height:22px;background:#ededfb"></div>
<div class="a s" style="left:358px;top:1341px;font-size:18.3px;line-height:24px;font-style:italic;color:#000">2 <span style="color:#7f0000">client</span> pkts, 2 <span style="color:#00007f">server</span> pkts, 1 turn.</div>
<div class="a" style="left:357px;top:1376px;width:558px;height:38px;background:#e1e1e1;border:1px solid #adadad"></div><div class="a s" style="left:365px;top:1382.5px;font-size:21.5px;line-height:28px">Entire conversation (720 bytes)</div><svg class="a" style="left:890px;top:1391px" width="12" height="8"><path d="M1,1L6,6L11,1" stroke="#444" stroke-width="1.2" fill="none"/></svg>
<div class="a s" style="left:1007px;top:1383.5px;font-size:21.5px;line-height:28px">Show data as</div>
<div class="a" style="left:1151px;top:1376px;width:190px;height:38px;background:#e1e1e1;border:1px solid #adadad"></div><div class="a s" style="left:1159px;top:1382.5px;font-size:21.5px;line-height:28px">ASCII</div><svg class="a" style="left:1316px;top:1391px" width="12" height="8"><path d="M1,1L6,6L11,1" stroke="#444" stroke-width="1.2" fill="none"/></svg>
<div class="a s" style="left:1457px;top:1383.5px;font-size:21.5px;line-height:28px">Stream</div>
<div class="a" style="left:1539px;top:1376px;width:54px;height:38px;background:#fff;border:1px solid #adadad"></div>
<div class="a s" style="left:1546px;top:1382.5px;font-size:21.5px;line-height:28px">0</div>
<div class="a" style="left:1560px;top:1380px;width:30px;height:15px;background:#e5e5e5;border:1px solid #cfcfcf"></div>
<div class="a" style="left:1560px;top:1395px;width:30px;height:15px;background:#e5e5e5;border:1px solid #cfcfcf"></div>
<svg class="a" style="left:1569px;top:1383px" width="12" height="26"><path d="M1,7L11,7L6,2Z M1,17L11,17L6,22Z" fill="#000"/></svg>
<div class="a s" style="left:358px;top:1439px;font-size:21.5px;line-height:28px">Find:</div>
<div class="a" style="left:419px;top:1432px;width:1012px;height:38px;background:#fff;border:1px solid #7a7a7a"></div>
<div class="a" style="left:1444px;top:1429px;width:148px;height:44px;background:#e1e1e1;border:2px solid #0078d7"></div><div class="a s" style="left:1444px;top:1438.5px;width:148px;text-align:center;font-size:21.5px;line-height:28px">Find Next</div>
<div class="a" style="left:554px;top:1487px;width:228px;height:44px;background:#e1e1e1;border:1px solid #adadad"></div><div class="a s" style="left:554px;top:1496.5px;width:228px;text-align:center;font-size:21.5px;line-height:28px">Filter Out This Stream</div>
<div class="a" style="left:796px;top:1487px;width:147px;height:44px;background:#e1e1e1;border:1px solid #adadad"></div><div class="a s" style="left:796px;top:1496.5px;width:147px;text-align:center;font-size:21.5px;line-height:28px">Print</div>
<div class="a" style="left:958px;top:1487px;width:147px;height:44px;background:#e1e1e1;border:1px solid #adadad"></div><div class="a s" style="left:958px;top:1496.5px;width:147px;text-align:center;font-size:21.5px;line-height:28px">Save as…</div>
<div class="a" style="left:1120px;top:1487px;width:147px;height:44px;background:#e1e1e1;border:1px solid #adadad"></div><div class="a s" style="left:1120px;top:1496.5px;width:147px;text-align:center;font-size:21.5px;line-height:28px">Back</div>
<div class="a" style="left:1282px;top:1487px;width:147px;height:44px;background:#e1e1e1;border:1px solid #adadad"></div><div class="a s" style="left:1282px;top:1496.5px;width:147px;text-align:center;font-size:21.5px;line-height:28px">Close</div>
<div class="a" style="left:1444px;top:1487px;width:148px;height:44px;background:#e1e1e1;border:1px solid #adadad"></div><div class="a s" style="left:1444px;top:1496.5px;width:148px;text-align:center;font-size:21.5px;line-height:28px">Help</div>
<svg class="a" style="left:1597px;top:1538px" width="16" height="16"><g fill="#b8b8b8"><rect x="11" y="2" width="3" height="3"/><rect x="7" y="6" width="3" height="3"/><rect x="11" y="6" width="3" height="3"/><rect x="3" y="10" width="3" height="3"/><rect x="7" y="10" width="3" height="3"/><rect x="11" y="10" width="3" height="3"/></g></svg>
</body></html>
